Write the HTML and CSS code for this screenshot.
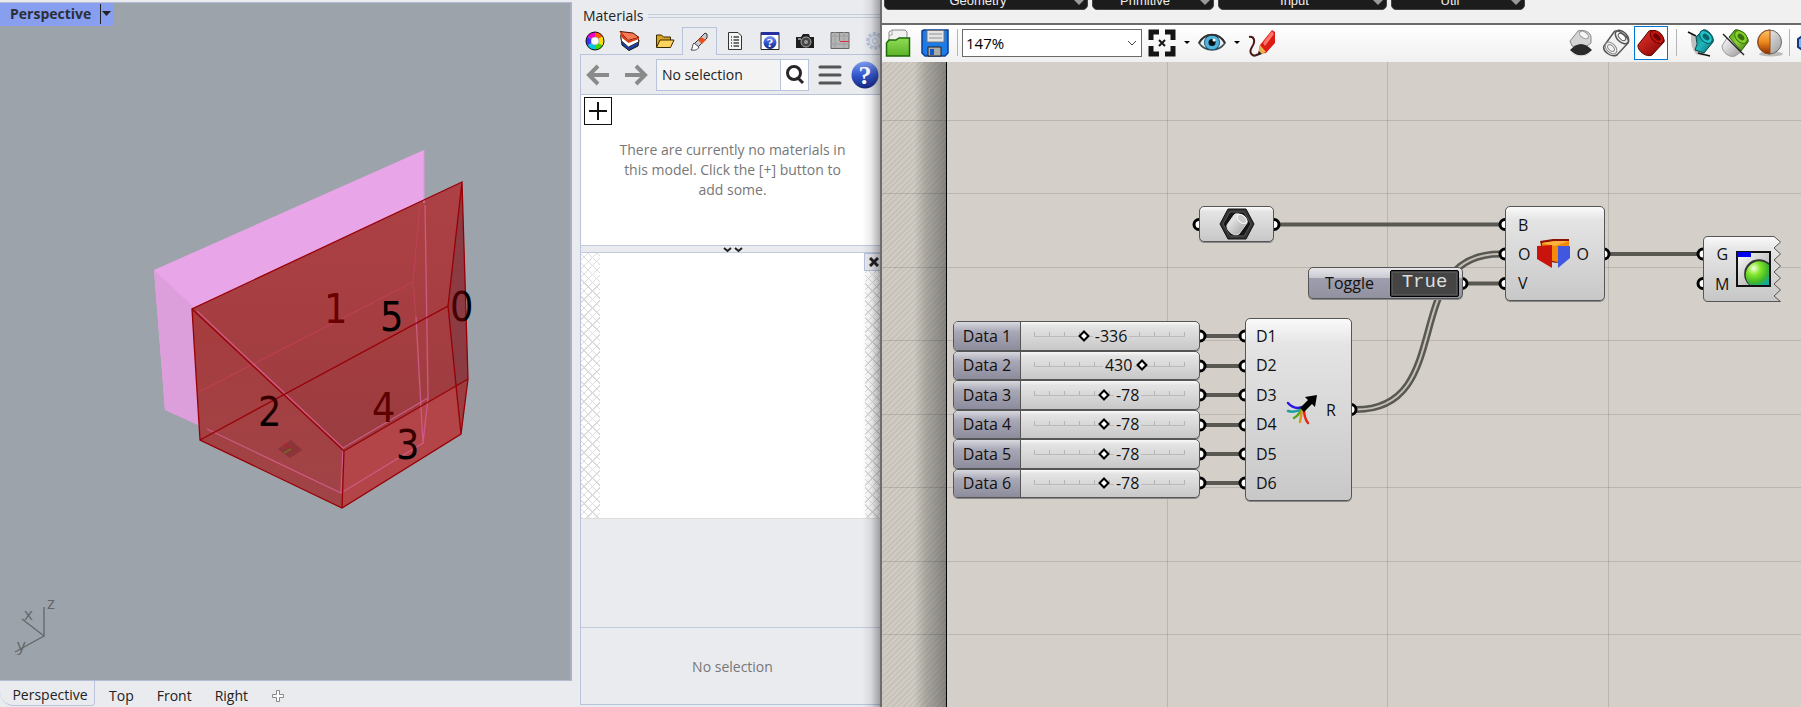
FILE: index.html
```html
<!DOCTYPE html>
<html lang="en">
<head>
<meta charset="utf-8">
<title>Perspective</title>
<link rel="stylesheet" href="styles.css">
</head>
<body>
<svg class="defs" aria-hidden="true">
  <defs>
    <linearGradient id="gRed" x1="0" y1="0" x2="1" y2="1"><stop offset="0" stop-color="#e8372c"/><stop offset="1" stop-color="#7e0000"/></linearGradient>
    <linearGradient id="gTeal" x1="0" y1="0" x2="1" y2="1"><stop offset="0" stop-color="#0a7f86"/><stop offset=".5" stop-color="#1fb5bb"/><stop offset="1" stop-color="#066067"/></linearGradient>
    <linearGradient id="gLime" x1="0" y1="0" x2="1" y2="1"><stop offset="0" stop-color="#4f9a10"/><stop offset=".5" stop-color="#8ed23a"/><stop offset="1" stop-color="#33700a"/></linearGradient>
    <linearGradient id="gGrey" x1="0" y1="0" x2="1" y2="1"><stop offset="0" stop-color="#fff"/><stop offset="1" stop-color="#9a9a9a"/></linearGradient>
    <linearGradient id="gOrange" x1="0" y1="0" x2="0" y2="1"><stop offset="0" stop-color="#f9c26b"/><stop offset=".5" stop-color="#ee8a1c"/><stop offset="1" stop-color="#8a2a00"/></linearGradient>
    <linearGradient id="gGreen" x1="0" y1="0" x2="0" y2="1"><stop offset="0" stop-color="#8fdc57"/><stop offset="1" stop-color="#5cb327"/></linearGradient>
    <linearGradient id="gBlue" x1="0" y1="0" x2="0" y2="1"><stop offset="0" stop-color="#7f9cf0"/><stop offset=".5" stop-color="#3457cf"/><stop offset="1" stop-color="#15277c"/></linearGradient>
    <radialGradient id="gBall" cx=".35" cy=".3" r=".8"><stop offset="0" stop-color="#f4ffe0"/><stop offset=".35" stop-color="#85e62a"/><stop offset=".75" stop-color="#3fb52a"/><stop offset="1" stop-color="#12aa9a"/></radialGradient>
    <linearGradient id="gNode" x1="0" y1="0" x2="0" y2="1"><stop offset="0" stop-color="#fafafa"/><stop offset=".2" stop-color="#e6e6e6"/><stop offset="1" stop-color="#c6c6c6"/></linearGradient>
  </defs>
</svg>

<main class="desktop">
  <section class="rhino">
    <div class="viewport">
      <div class="view-title"><span>Perspective</span><button class="view-menu" aria-label="Viewport menu"><svg width="11" height="19" viewBox="0 0 11 19"><path d="M1 7h9l-4.500 5z" fill="#222"/></svg></button></div>
      <svg class="scene" width="570" height="677" viewBox="0 3 570 677">
        <defs>
          <linearGradient id="face1" x1="0" y1="0" x2="0" y2="1"><stop offset="0" stop-color="#ad4145"/><stop offset=".5" stop-color="#a63e41"/><stop offset="1" stop-color="#993c40"/></linearGradient>
          <linearGradient id="face2" x1="0" y1="0" x2="0" y2="1"><stop offset="0" stop-color="#a63c3e"/><stop offset="1" stop-color="#a04447"/></linearGradient>
          <linearGradient id="mix0"><stop offset=".58" stop-color="#460000"/><stop offset=".68" stop-color="#000"/></linearGradient>
          <linearGradient id="mix2" x1="0" y1="0" x2="0" y2="1"><stop offset=".3" stop-color="#3a0000"/><stop offset=".7" stop-color="#000"/></linearGradient>
        </defs>
        <path d="M424 150 154 270l11 140 35 15 40 24 185-60z" fill="#e8a6e8"/>
        <path d="M154 270 198 311 200 426 165 410z" fill="#dd9fdc"/>
        <path d="M462 182 192 309 344 451 468 379z" fill="url(#face1)"/>
        <path d="M192 309 200 440 342 508 344 451z" fill="url(#face2)"/>
        <path d="M344 451 342 508 461 434 468 379z" fill="#b34548"/>
        <path d="M462 182 448 306 455 386 468 379z" fill="#8b3b41"/>
        <path d="M455 386 461 434 468 379z" fill="#9c3d42"/>
        <path d="M424 150V203" stroke="#d89ad8" fill="none"/>
        <g fill="none" stroke="#c04058" stroke-width="1"><path d="M420 204 413 282 416 317M413 282 197 393"/></g>
        <g fill="none" stroke="#cc5a83" stroke-width="1.3"><path d="M197 311 343 448 341 493 207 429M341 493 423 443 428 398 343 448M428 398 425 205M416 317 423 443"/></g>
        <g fill="none" stroke="#980006" stroke-width="1.3"><path d="M462 182 192 309 200 440 342 508 461 434 468 379zM192 309 344 451 342 508M344 451 468 379M462 182 448 306 200 440M448 306 461 434"/></g>
        <path d="M278 449 291 440 302 450 290 458z" fill="#8b343a"/><path d="M284 444 291 449" stroke="#b3202a" stroke-width="1.5"/><path d="M291 449 284 453" stroke="#756a20" stroke-width="1.5"/>
        <g class="face-no">
          <text x="324" y="323" fill="#6b0000">1</text><text x="380" y="331">5</text>
          <text x="450" y="321" fill="url(#mix0)">0</text><text x="258" y="426" fill="url(#mix2)">2</text>
          <text x="372" y="422" fill="#5c0000">4</text><text x="396" y="459" fill="url(#mix2)">3</text>
        </g>
        <path d="M44 607V636L22 619M44 636 15 652" fill="none" stroke="#62666a" stroke-width="1.3"/>
        <g class="axis"><text x="47" y="609">z</text><text x="24" y="620">x</text><text x="17" y="651">y</text></g>
      </svg>
    </div>
    <nav class="view-tabs">
      <button class="view-tab current">Perspective</button><button class="view-tab">Top</button><button class="view-tab">Front</button><button class="view-tab">Right</button>
      <button class="view-tab add" aria-label="New view"><svg width="12" height="12" viewBox="0 0 12 12"><path d="M4.500 .5h3v4h4v3h-4v4h-3v-4h-4v-3h4z" fill="#fff" stroke="#888"/></svg></button>
    </nav>
  </section>

  <section class="materials">
    <header class="panel-title"><h2>Materials</h2><span class="rule"></span></header>
    <div class="panel-tabs">
      <button aria-label="Display"><svg width="20" height="20" viewBox="0 0 20 20"><g fill="none" stroke-width="5"><path d="M10 3.500A6.500 6.500 0 0 1 15.600 6.800" stroke="#ff5a00"/><path d="M15.600 6.700A6.500 6.500 0 0 1 15.600 13.300" stroke="#ffe000"/><path d="M15.600 13.200A6.500 6.500 0 0 1 10 16.500" stroke="#4bd400"/><path d="M10 16.500A6.500 6.500 0 0 1 4.400 13.300" stroke="#00c8e0"/><path d="M4.400 13.300A6.500 6.500 0 0 1 4.400 6.700" stroke="#3a30ff"/><path d="M4.400 6.800A6.500 6.500 0 0 1 10 3.500" stroke="#f000c0"/></g><circle cx="10" cy="10" r="9" fill="none" stroke="#111"/><circle cx="10" cy="10" r="4" fill="#fff" stroke="#8888"/></svg></button>
      <button aria-label="Layers"><svg width="22" height="20" viewBox="0 0 22 20"><path d="M2 6 3 14 10 19.500 19 15 20 9z" fill="#1d3fae" stroke="#111"/><path d="M1.500 4 2.500 10 9.500 16 19.500 11V6z" fill="#fff" stroke="#333"/><path d="M1 .5 14 2 20 6.500 9 9.500z" fill="#f97a52" stroke="#501008"/><path d="M1 .5 9 9.500 20 6.500V8L9.500 12 2 6z" fill="#d8401c"/></svg></button>
      <button aria-label="Files"><svg width="20" height="20" viewBox="0 0 20 20"><path d="M1.500 16V4h5l2 2h7v3" fill="#d9a520" stroke="#3a2a00"/><path d="M1.500 16.500 5 9h14l-3.500 7.500z" fill="#ffd45e" stroke="#3a2a00"/></svg></button>
      <button class="current" aria-label="Materials"><svg width="20" height="20" viewBox="0 0 20 20"><path d="M15 1 17 2 17 6 8 15 4 12 11 5z" fill="#c9c9c9" stroke="#333"/><path d="M11 5 16 8 12 12 8 8z" fill="#e8501c"/><path d="M4 11 9 15C7 19 4 18 1 18 3 16 2 13 4 11z" fill="#fff" stroke="#444"/></svg></button>
      <button aria-label="Notes"><svg width="16" height="20" viewBox="0 0 16 20"><path d="M1.500 1.500H11L14.500 5V18.500H1.500z" fill="#f4f4f4" stroke="#333"/><path d="M4 6h1M6.500 6H12M4 9h1M6.500 9H12M4 12h1M6.500 12H12M4 15h1M6.500 15H12" stroke="#444" stroke-width="1.500"/></svg></button>
      <button aria-label="Help"><svg width="20" height="20" viewBox="0 0 20 20"><path d="M1 1.500H19V18.500H1z" fill="#fff" stroke="#222"/><path d="M1 1H19V4H1z" fill="#2430a0"/><circle cx="10" cy="11.500" r="6.500" fill="url(#gBlue)"/><text x="10" y="16" class="q-small">?</text></svg></button>
      <button aria-label="Named views"><svg width="20" height="20" viewBox="0 0 20 20"><path d="M1 6H6L8 3H14L15 6H19V17H1z" fill="#1e1e1e"/><circle cx="11" cy="11" r="5" fill="#454545" stroke="#aaa"/><circle cx="11" cy="11" r="2" fill="#999"/><path d="M3 7h3v2H3z" fill="#888"/></svg></button>
      <button aria-label="Construction planes"><svg width="20" height="20" viewBox="0 0 20 20"><path d="M1 1.500H19V17.500H1z" fill="#b4b4b4" stroke="#666"/><path d="M1 5h18M1 13h18M5 1v16M14 1v16" stroke="#a0a0a0"/><path d="M9.500 2V10" stroke="#39b54a"/><path d="M10 10.500h9" stroke="#e03040"/></svg></button>
      <button aria-label="Options"><svg width="20" height="20" viewBox="0 0 20 20"><circle cx="10" cy="10" r="7.500" fill="none" stroke="#bcc7dc" stroke-width="3" stroke-dasharray="3 1.700"/><circle cx="10" cy="10" r="6" fill="#dfe4ee" stroke="#bcc7dc"/><circle cx="10" cy="10" r="2.500" fill="#eaebef" stroke="#bcc7dc"/></svg></button>
    </div>
    <div class="panel-body">
      <div class="panel-nav">
        <button aria-label="Back"><svg width="24" height="22" viewBox="0 0 24 22"><path d="M23 11H3M12 2 3 11 12 20" fill="none" stroke="#8a8a8a" stroke-width="4"/></svg></button>
        <button class="next" aria-label="Forward"><svg width="24" height="22" viewBox="0 0 24 22"><path d="M1 11H21M12 2 21 11 12 20" fill="none" stroke="#8a8a8a" stroke-width="4"/></svg></button>
        <div class="search"><input type="text" aria-label="Selected material" value="No selection"><button aria-label="Search"><svg width="22" height="22" viewBox="0 0 22 22"><circle cx="10" cy="9" r="6.500" fill="none" stroke="#262626" stroke-width="3"/><path d="M14 14 19 19" stroke="#262626" stroke-width="3"/></svg></button></div>
        <button aria-label="Menu"><svg width="24" height="22" viewBox="0 0 24 22"><path d="M2 3H22M2 11H22M2 19H22" stroke="#555" stroke-width="3" stroke-linecap="round"/></svg></button>
        <button class="help" aria-label="Help"><svg width="28" height="28" viewBox="0 0 28 28"><circle cx="14" cy="14" r="13.500" fill="url(#gBlue)"/><text x="14" y="23" class="q-big">?</text></svg></button>
      </div>
      <div class="list">
        <button class="plus" aria-label="Add material"><svg width="18" height="18" viewBox="0 0 18 18"><path d="M9 0V18M0 9H18" stroke="#111" stroke-width="2"/></svg></button>
        <p>There are currently no materials in<br>this model. Click the [+] button to<br>add some.</p>
      </div>
      <div class="splitter"><svg width="20" height="6" viewBox="0 0 20 6"><path d="M1 1 4.500 4 8 1M12 1 15.500 4 19 1" fill="none" stroke="#222" stroke-width="2"/></svg></div>
      <div class="preview"><button aria-label="Close preview"><svg width="10" height="10" viewBox="0 0 10 10"><path d="M1 1 9 9M9 1 1 9" stroke="#222" stroke-width="3"/></svg></button></div>
      <div class="spacer"></div>
      <p class="status">No selection</p>
    </div>
  </section>

  <section class="grasshopper">
    <nav class="ribbon">
      <button class="w204">Geometry<i></i></button><button class="w122">Primitive<i></i></button><button class="w168">Input<i></i></button><button class="w134">Util<i></i></button>
    </nav>
    <div class="toolbar">
      <button class="tool" aria-label="Open"><svg width="28" height="28" viewBox="0 0 28 28"><path d="M5 14V3L8 1H21L23 3V14z" fill="#f1f1f1" stroke="#888"/><path d="M8 1V6H5" fill="#fff" stroke="#999"/><path d="M2.500 27V14L5 11H12L15 9H25.500V27z" fill="url(#gGreen)" stroke="#1d6908" stroke-width="1.500"/></svg></button>
      <button class="tool save" aria-label="Save"><svg width="28" height="28" viewBox="0 0 28 28"><path d="M1 2 3 1H27V24L24 27H4L1 24z" fill="#1b7be8" stroke="#0d3c97" stroke-width="1.500"/><path d="M6 1.500H23V13H6z" fill="#e4e4e4" stroke="#777"/><path d="M8 5H21M8 9H21" stroke="#bbb" stroke-width="2"/><path d="M7 18H20V27H7z" fill="#aaa" stroke="#222"/><path d="M9 20h4v6H9z" fill="#155ac0"/></svg></button>
      <span class="sep"></span>
      <div class="zoom"><select aria-label="Zoom"><option>147%</option></select><svg width="10" height="6" viewBox="0 0 10 6"><path d="M1 0 5 4 9 0" fill="none" stroke="#444"/></svg></div>
      <button class="tool fit" aria-label="Zoom extents"><svg width="28" height="28" viewBox="0 0 28 28"><path d="M3 11V3H11M17 3H25V11M25 17V25H17M11 25H3V17" fill="none" stroke="#151515" stroke-width="5"/><path d="M11 11 17 17M17 11 11 17" stroke="#151515" stroke-width="2"/></svg></button>
      <span class="caret"></span>
      <button class="tool" aria-label="Named views"><svg width="28" height="28" viewBox="0 0 28 28"><path d="M1 14C7 3 21 3 27 14 21 23 7 23 1 14z" fill="#e6eef0" stroke="#3c4a4c" stroke-width="1.500"/><circle cx="14" cy="13.500" r="7.500" fill="#4fb4dc" stroke="#144c70"/><circle cx="14" cy="13.500" r="3.500" fill="#051018"/><circle cx="16" cy="11" r="1.500" fill="#fff"/><path d="M1 14C7 3 21 3 27 14" fill="none" stroke="#333" stroke-width="2"/></svg></button>
      <span class="caret"></span>
      <button class="tool" aria-label="Sketch"><svg width="28" height="28" viewBox="0 0 28 28"><path d="M1 8C6 7 8 12 4 18 0 24 5 29 10 25" fill="none" stroke="#4b1a14" stroke-width="2"/><path d="M10 25 12 16 24 1 27 3 27 14 18 24z" fill="#dd1c14"/><path d="M15 14 24 2 26 5 17 17z" fill="#ff756b"/><path d="M10 26 12 16 18 23z" fill="#e9b454"/><path d="M9 27 11 22 14 25z" fill="#222"/></svg></button>
      <div class="tools-right">
        <button class="tool" aria-label="No preview"><svg width="28" height="28" viewBox="0 0 28 28"><path d="M3 12 11 2C16 0 24 3 24 8V14L16 20 5 17z" fill="#d4d4d4" stroke="#888"/><ellipse cx="17" cy="6" rx="5" ry="3" transform="rotate(35 17 6)" fill="#f6f6f6" stroke="#999"/><path d="M3 21Q14 9 25 21 14 32 3 21z" fill="#2a2a2a"/><path d="M5 24Q14 30 23 24" fill="none" stroke="#ddd"/></svg></button>
        <button class="tool" aria-label="Wireframe preview"><svg width="28" height="28" viewBox="0 0 28 28"><path d="M2 17 12 3C15-1 29 9 26 14L15 26C9 29 0 22 2 17z" fill="#f2f2f2" stroke="#555" stroke-width="1.500"/><ellipse cx="20" cy="8" rx="8" ry="5" transform="rotate(45 20 8)" fill="none" stroke="#555" stroke-width="1.500"/><ellipse cx="20" cy="8" rx="4.500" ry="2.500" transform="rotate(45 20 8)" fill="#fff" stroke="#555"/><ellipse cx="9" cy="19" rx="7" ry="4.500" transform="rotate(45 9 19)" fill="none" stroke="#888"/><ellipse cx="9" cy="19" rx="4" ry="2.500" transform="rotate(45 9 19)" fill="none" stroke="#888"/></svg></button>
        <button class="tool selected" aria-label="Shaded preview"><svg width="28" height="28" viewBox="0 0 28 28"><path d="M1 16 12 2C16-1 29 8 27 13L15 26C10 29 0 22 1 16z" fill="url(#gRed)" stroke="#5a0000"/><ellipse cx="20" cy="8" rx="8" ry="5" transform="rotate(42 20 8)" fill="#c2140c" stroke="#6a0000"/><ellipse cx="20" cy="8" rx="4.500" ry="2.500" transform="rotate(42 20 8)" fill="#700000"/></svg></button>
        <span class="sep"></span>
        <button class="tool" aria-label="Draw selected"><svg width="28" height="28" viewBox="0 0 28 28"><path d="M5 5 10 8V19L18 27 10 25Q4 18 5 5z" fill="#9a9a9a" opacity=".6"/><path d="M10 8 17 1C21-1 29 8 27 13L18 24 9 21 11 15z" fill="url(#gTeal)" stroke="#06474c"/><ellipse cx="20" cy="8" rx="7.500" ry="5" transform="rotate(45 20 8)" fill="#21c3c8" stroke="#075d62"/><ellipse cx="20" cy="8" rx="4" ry="2.500" transform="rotate(45 20 8)" fill="#04656b"/><path d="M2 3 10 7M12 24 24 27" stroke="#111" stroke-width="1.500"/></svg></button>
        <button class="tool" aria-label="Document preview"><svg width="28" height="28" viewBox="0 0 28 28"><path d="M1 17 6 9 20 23 14 27C8 29 1 23 1 17z" fill="url(#gGrey)" stroke="#999"/><path d="M8 8 14 1C18-1 29 8 27 13L20 22z" fill="url(#gLime)" stroke="#2c5a08"/><ellipse cx="20" cy="8" rx="7.500" ry="5" transform="rotate(45 20 8)" fill="#86d02c" stroke="#3a7610"/><ellipse cx="20" cy="8" rx="4" ry="2.500" transform="rotate(45 20 8)" fill="#39700c"/><path d="M2 5 23 26" stroke="#222" stroke-width="1.500"/></svg></button>
        <button class="tool" aria-label="Preview settings"><svg width="28" height="28" viewBox="0 0 28 28"><ellipse cx="15" cy="25" rx="12" ry="2.500" fill="#bbb"/><circle cx="13.500" cy="13" r="12" fill="url(#gGrey)" stroke="#666"/><path d="M14 1A12 12 0 0 0 14 25z" fill="url(#gOrange)" stroke="#9a4a10"/></svg></button>
        <span class="sep late"></span>
        <button class="tool cut" aria-label="Mesh settings"><svg width="28" height="28" viewBox="0 0 28 28"><path d="M1 10 7 6H22V22H7L1 18z" fill="#7fb6ee" stroke="#14387e" stroke-width="2"/></svg></button>
      </div>
    </div>

    <div class="canvas">
      <div class="margin"></div>
      <svg class="wires" width="919" height="645" viewBox="882 62 919 645">
        <g class="grid"><path d="M1167.500 62V707M1387.500 62V707M1608.500 62V707M882 120.500H1801M882 193.500H1801M882 267.500H1801M882 340.500H1801M882 414.500H1801M882 487.500H1801M882 561.500H1801M882 634.500H1801"/></g>
        <g class="wire"><path d="M1279 224.500H1500M1467 283.500H1500M1609 254H1698M1205 336H1240M1205 366H1240M1205 395H1240M1205 425H1240M1205 454H1240M1205 483H1240"/></g>
        <path class="wire-outer" d="M1356 409.500C1458 409.500 1398 254 1500 254"/><path class="wire-inner" d="M1356 409.500C1458 409.500 1398 254 1500 254"/>
        <g class="grip"><circle cx="1199" cy="224.500" r="5"/><circle cx="1274" cy="224.500" r="5"/><circle cx="1462" cy="283.500" r="5"/><circle cx="1505" cy="224.500" r="5"/><circle cx="1505" cy="254" r="5"/><circle cx="1505" cy="283.500" r="5"/><circle cx="1604" cy="254" r="5"/><circle cx="1703" cy="254" r="5"/><circle cx="1703" cy="283.500" r="5"/><circle cx="1351" cy="409.500" r="5"/>
          <circle cx="1200" cy="336" r="5"/><circle cx="1200" cy="366" r="5"/><circle cx="1200" cy="395" r="5"/><circle cx="1200" cy="425" r="5"/><circle cx="1200" cy="454" r="5"/><circle cx="1200" cy="483" r="5"/>
          <circle cx="1245" cy="336" r="5"/><circle cx="1245" cy="366" r="5"/><circle cx="1245" cy="395" r="5"/><circle cx="1245" cy="425" r="5"/><circle cx="1245" cy="454" r="5"/><circle cx="1245" cy="483" r="5"/></g>
      </svg>

      <div class="node brep"><svg width="36" height="32" viewBox="0 0 36 32"><path d="M9 1H27L35 16 27 31H9L1 16z" fill="#333" stroke="#111"/><path d="M11 4H25L32 16 25 28H11L4 16z" fill="#161616" stroke="#555"/><path d="M8 17 15 7C18 3 30 9 28 15L20 26C15 29 7 23 8 17z" fill="url(#gGrey)" stroke="#ddd"/><ellipse cx="23" cy="11" rx="5.500" ry="3.500" transform="rotate(42 23 11)" fill="#ccc" stroke="#fff"/></svg></div>

      <div class="node toggle"><span id="tg">Toggle</span><button aria-labelledby="tg" aria-pressed="true">True</button></div>

      <div class="node offset"><div class="ports"><span>B</span><span>O</span><span>V</span></div>
        <svg width="34" height="30" viewBox="0 0 34 30"><path d="M3 2 16 0 32 0V16L20 24 8 22z" fill="#8c1206"/><path d="M5 4 18 2H32V18L20 23 5 19z" fill="#f58a0a"/><path d="M5 4 18 2H32L18 7z" fill="#ffb13c"/><path d="M0 7 15 6V29L0 20z" fill="#c8140c"/><path d="M21 7H33V19L21 29z" fill="#4058e0"/></svg>
        <span>O</span></div>

      <div class="preview-node"><svg class="torn" width="79" height="66" viewBox="0 0 79 66"><path d="M5 .5H71L77.500 6 71 12 77.500 18 71 24 77.500 30 71 36 77.500 42 71 48 77.500 54 71 60 77.500 65.500H5Q.5 65.500.5 61V5Q.5.5 5 .5z" fill="url(#gNode)" stroke="#555"/></svg>
        <div class="ports"><span>G</span><span>M</span></div>
        <svg width="35" height="36" viewBox="0 0 35 36"><path d="M1 1H34V35H1z" fill="url(#gGrey)" stroke="#111" stroke-width="2"/><path d="M1 1H15V6H1z" fill="#0000f0"/><path d="M33 12A13 13 0 0 0 13 34H33z" fill="#333"/><path d="M33 14A11 11 0 0 0 14 34H33z" fill="url(#gBall)"/></svg></div>

      <div class="sliders">
        <label class="slider"><span>Data 1</span><div class="track"><input type="range" min="-1000" max="1000" value="-336"><output class="after" style="--pos:33%">-336</output></div></label>
        <label class="slider"><span>Data 2</span><div class="track"><input type="range" min="-1000" max="1000" value="430"><output class="before" style="--pos:72%">430</output></div></label>
        <label class="slider"><span>Data 3</span><div class="track"><input type="range" min="-1000" max="1000" value="-78"><output class="after" style="--pos:46%">-78</output></div></label>
        <label class="slider"><span>Data 4</span><div class="track"><input type="range" min="-1000" max="1000" value="-78"><output class="after" style="--pos:46%">-78</output></div></label>
        <label class="slider"><span>Data 5</span><div class="track"><input type="range" min="-1000" max="1000" value="-78"><output class="after" style="--pos:46%">-78</output></div></label>
        <label class="slider"><span>Data 6</span><div class="track"><input type="range" min="-1000" max="1000" value="-78"><output class="after" style="--pos:46%">-78</output></div></label>
      </div>

      <div class="node merge"><div class="ports"><span>D1</span><span>D2</span><span>D3</span><span>D4</span><span>D5</span><span>D6</span></div>
        <svg width="32" height="32" viewBox="0 0 32 32"><g fill="none" stroke-width="2.500" stroke-linecap="round"><path d="M17 13Q8 16 2 9" stroke="#2a16e0"/><path d="M16 15Q9 19 2 17" stroke="#1a9ea6"/><path d="M16 15Q13 21 8 24" stroke="#55a51e"/><path d="M16 16Q15 23 14 28" stroke="#d8981c"/><path d="M18 15Q18 24 22 29" stroke="#e8231c"/></g><path d="M14 14 22 6 19 3 31 1 29 13 26 10 18 18z" fill="#000"/></svg>
        <span>R</span></div>
    </div>
  </section>
</main>
</body>
</html>
```
FILE: styles.css
```css
* { box-sizing: border-box; }
body { margin: 0; background: #eaebef; color: #222; font: 14px/20px "Open Sans", "Noto Sans", sans-serif; }
button, input, select { font: inherit; color: inherit; border: 0; padding: 0; margin: 0; background: none; }
svg { display: block; flex: none; }
p, h2 { margin: 0; font-weight: 400; font-size: 14px; }
.defs { position: absolute; width: 0; height: 0; }

.desktop { display: grid; grid-template-columns: minmax(0, 572fr) 308px minmax(0, 921fr); height: 100vh; min-height: 707px; overflow: hidden; }

/* modelling viewport */
.rhino { display: flex; flex-direction: column; padding-top: 2px; }
.viewport { flex: 1; position: relative; min-height: 0; overflow: hidden; background: #9da3aa; border: 1px solid #b4bdd4; border-left: 0; border-right: 2px solid #a9b0c2; }
.view-title { position: absolute; display: flex; align-items: center; height: 23px; width: 114px; padding: 0 2px 2px 10px; background: #889ff0; border-radius: 0 0 4px 0; font-weight: 700; color: #2b2f3a; }
.view-title span { flex: 1; }
.view-menu { height: 20px; border-left: 1px solid #222; }
.face-no { font: 41px "DejaVu Sans Condensed", "DejaVu Sans", sans-serif; }
.axis { font: 17px "Open Sans", sans-serif; fill: #62666a; }
.view-tabs { display: flex; height: 26px; }
.view-tab { padding: 3px 14px 0; }
.view-tab.current { width: 95px; height: 25px; border: 1px solid #bcc5dc; border-top: 0; border-left: 0; border-radius: 0 0 4px 14px; padding: 3px 0 0 6px; }
.view-tab:nth-child(3) { padding: 3px 9px 0; }
.view-tab.add { padding: 3px 8px 0 10px; }

/* materials panel */
.materials { position: relative; display: flex; flex-direction: column; min-width: 0; overflow: hidden; padding: 6px 0 2px 8px; }
.materials::after { content: ""; position: absolute; top: 0; right: 0; bottom: 0; width: 18px; background: linear-gradient(90deg, transparent, rgba(0,0,0,.08) 50%, rgba(0,0,0,.32)); pointer-events: none; }
.panel-title { display: flex; align-items: center; gap: 5px; padding-left: 3px; height: 20px; }
.rule { flex: 1; height: 4px; border: 1px solid #c2cbe0; border-width: 1px 0; }
.panel-tabs { display: grid; grid-template-columns: repeat(9, 35px); height: 28px; align-items: stretch; width: 315px; margin: 1px 0 -1px -3px; position: relative; }
.panel-tabs button { display: grid; place-items: center; }
.panel-tabs .current { z-index: 1; background: #eaebef; border: 1px solid #b8c4dc; border-bottom: 0; }
.panel-body { flex: 1; display: flex; flex-direction: column; width: 305px; border: 1px solid #b8c4dc; }
.q-small { font: 700 13px "Liberation Serif", serif; fill: #fff; text-anchor: middle; }
.q-big { font: 700 26px "Liberation Serif", serif; fill: #fff; text-anchor: middle; }
.panel-nav { display: flex; align-items: center; height: 39px; padding-left: 5px; }
.panel-nav .next { margin-left: 14px; }
.search { display: flex; width: 153px; height: 32px; margin: 0 9px 0 8px; border: 1px solid #b8c4dc; background: #fff; }
.search input { width: 124px; padding-left: 5px; background: #f3f3f3; border-right: 1px solid #b8c4dc; }
.search button { flex: 1; display: grid; place-items: center; }
.panel-nav .help { margin-left: 9px; }
.list { position: relative; height: 151px; padding-top: 45px; background: #fff; border-top: 1px solid #b8c4dc; text-align: center; color: #777; }
.plus { position: absolute; left: 3px; top: 2px; display: grid; place-items: center; width: 28px; height: 28px; border: 1px solid #111; background: #fff; }
.splitter { display: flex; justify-content: center; height: 8px; padding-top: 1px; border: 1px solid #c2cade; border-width: 1px 0; }
.preview { height: 266px; padding: 0 2px; border-bottom: 1px solid #ddd; background-color: #fff;
  background-image: linear-gradient(90deg, transparent 19px, #fff 19px, #fff 284px, transparent 284px), repeating-linear-gradient(45deg, #dcdcdc 0 1px, transparent 1px 6px), repeating-linear-gradient(-45deg, #dcdcdc 0 1px, transparent 1px 6px); }
.preview button { display: grid; place-items: center; width: 19px; height: 18px; margin-left: 281px; background: #eaebef; border: 1px solid #b8c4dc; }
.spacer { flex: 1; }
.status { height: 77px; line-height: 78px; text-align: center; color: #777; border-top: 1px solid #c2cade; }

/* node editor */
.grasshopper { display: flex; flex-direction: column; min-width: 0; background: #f0f0f0; border-left: 2px solid #6d6d6d; }
.ribbon { display: flex; align-items: flex-end; gap: 4px; height: 23px; padding: 0 0 13px 2px; overflow: hidden; }
.ribbon button { position: relative; flex: none; height: 24px; padding: 5px 16px 0 0; border-radius: 5px; border: 1px solid #444; background: #1c1c1c; color: #eee; font: 13px/16px "Liberation Sans", sans-serif; }
.ribbon i { position: absolute; right: 3px; bottom: 4px; border: 5px solid transparent; border-top-color: #999; border-bottom: 0; }
.w204 { width: 204px; } .w122 { width: 122px; } .w168 { width: 169px; } .w134 { width: 134px; }
.toolbar { display: flex; align-items: center; height: 39px; padding: 0 0 2px 2px; border-top: 2px solid #6b6b6b; background: linear-gradient(#fff, #f0f0f0); overflow: hidden; }
.tool { flex: none; width: 28px; height: 28px; }
.save { margin-left: 9px; }
.sep { flex: none; width: 1px; height: 27px; margin: 0 4px 0 8px; background: #b5b5b5; }
.zoom { position: relative; flex: none; }
.zoom select { display: block; width: 180px; height: 28px; padding-left: 3px; appearance: none; background: #fff; border: 1px solid #6a6a6a; color: #000; font-size: 15px; }
.zoom svg { position: absolute; right: 5px; top: 12px; pointer-events: none; }
.fit { margin-left: 6px; }
.caret { flex: none; margin: 0 8px; border: 3px solid transparent; border-top-color: #000; border-bottom: 0; }
.tools-right { display: flex; align-items: center; gap: 7px; margin-left: auto; }
.tools-right .selected { display: grid; place-items: center; width: 34px; height: 34px; margin-left: -3px; border: 1px solid #0078d7; background: #fff; }
.tools-right .sep { margin: 0 2px 0 1px; }
.tools-right .late { margin: 0 0 0 -2px; }
.cut { width: 4px; overflow: hidden; }

.canvas { position: relative; flex: 1; min-height: 0; overflow: hidden; background: #d4cfc8; color: #111; font-size: 16px; }
.margin { position: absolute; top: 0; bottom: 0; left: 0; width: 65px; border-right: 1px solid #000;
  background: linear-gradient(90deg, transparent 32px, rgba(60,60,60,.25) 44px, rgba(60,60,60,.5)), repeating-linear-gradient(135deg, #d0ccc4 0 2px, #c6c2b9 2px 4px); }
.wires { position: absolute; left: 0; top: 0; }
.grid { stroke: #000; stroke-opacity: .12; }
.wire { stroke: #5a5853; stroke-width: 4; }
.wire-outer { fill: none; stroke: #5a5853; stroke-width: 7; }
.wire-inner { fill: none; stroke: #c4c0b9; stroke-width: 2; }
.grip { fill: #fff; stroke: #000; stroke-width: 3; }

.node, .slider { border: 1px solid #555; border-radius: 5px; background: linear-gradient(#fafafa, #e4e4e4 14%, #c8c8c8); box-shadow: 0 1px 0 #888; }
.node, .preview-node, .sliders { position: absolute; }
.ports { display: grid; grid-auto-rows: 1fr; align-items: center; height: 100%; }
.brep { left: 317px; top: 144px; width: 75px; height: 36px; display: grid; place-items: center; }
.toggle { left: 426px; top: 205px; width: 155px; height: 32px; display: flex; align-items: center; padding-right: 3px; background: linear-gradient(#e6e6ea, #c8c8d0 34%, #9f9eae 35%, #92919f); }
.toggle span { flex: 1; text-align: center; }
.toggle button { width: 69px; height: 27px; padding-bottom: 3px; border: 1px solid #000; border-radius: 2px; outline: 1px solid #8884; outline-offset: -3px; background: #444; color: #ddd; font: 19px/20px "Liberation Mono", monospace; }
.offset { left: 623px; top: 144px; width: 100px; height: 95px; display: flex; align-items: center; justify-content: space-between; padding: 3px 15px 3px 12px; }
.preview-node { z-index: 0; left: 821px; top: 174px; width: 79px; height: 66px; display: flex; align-items: center; gap: 7px; padding: 3px 0 3px 12px; }
.preview-node .ports { justify-items: center; }
.torn { position: absolute; left: 0; top: 0; z-index: -1; }
.sliders { left: 71px; top: 259px; width: 247px; height: 177px; display: grid; grid-auto-rows: 1fr; }
.slider { display: flex; }
.slider > span { width: 67px; display: grid; place-items: center; border-right: 1px solid #555; border-radius: 4px 0 0 4px; background: linear-gradient(#d8d8de, #a8a7b6 35%, #8d8c9c); }
.track { position: relative; margin-left: 7px; width: 163px; display: flex; align-items: center;
  background: linear-gradient(#bbb, #bbb) 6px 14px / 151px 1px no-repeat, repeating-linear-gradient(90deg, #b4b4b4 0 1px, transparent 1px 15px) 6px 10px / 151px 4px no-repeat; }
.track input { appearance: none; width: 100%; height: 20px; position: relative; z-index: 1; }
.track input::-webkit-slider-thumb { appearance: none; width: 12px; height: 12px; background: #fff; border: 3px solid #000; transform: rotate(45deg) scale(.7); }
.track output { position: absolute; padding: 0 2px; line-height: 20px; background: linear-gradient(#dbdbdb, #d7d7d7) center / 100% 9px no-repeat; }
.after { left: calc(var(--pos) + 11px); }
.before { right: calc(100% - var(--pos) + 11px); }
.merge { left: 363px; top: 256px; width: 107px; height: 183px; display: flex; align-items: center; justify-content: space-between; padding: 2px 15px 2px 10px; }
.merge svg { margin-left: 2px; }
```
